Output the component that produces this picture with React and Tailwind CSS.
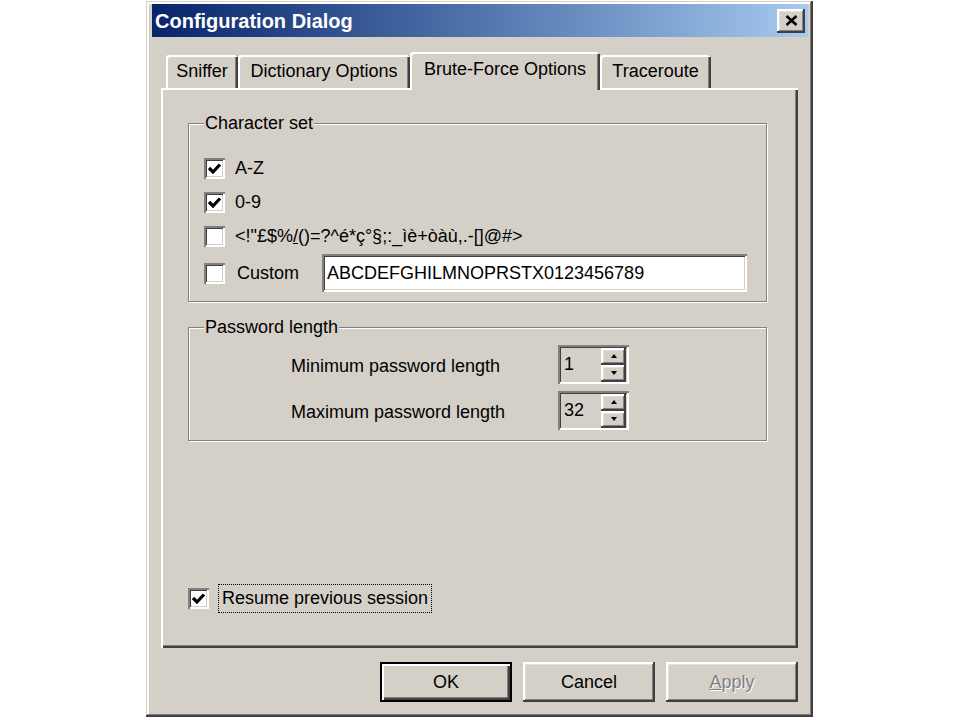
import React from "react";

// classic win2k bevels
const raised =
  "shadow-[inset_-2px_-2px_#404040,inset_2px_2px_#ffffff,inset_-3px_-3px_#808080,inset_3px_3px_#e4e1da]";
const sunken =
  "shadow-[inset_2px_2px_#808080,inset_-2px_-2px_#ffffff,inset_3px_3px_#404040,inset_-3px_-3px_#d4d0c8]";
const etched =
  "border border-[#808080] shadow-[inset_1px_1px_#ffffff,1px_1px_#ffffff]";

function CheckBox({ checked }) {
  return (
    <span
      className={`flex h-[21px] w-[21px] shrink-0 items-center justify-center bg-white ${sunken}`}
    >
      {checked && (
        <svg width="15" height="15" viewBox="0 0 15 15">
          <path
            d="M2 7 L6 11 L13 3.5"
            fill="none"
            stroke="#000"
            strokeWidth="3.2"
          />
        </svg>
      )}
    </span>
  );
}

function CheckRow({ checked, children }) {
  return (
    <div className="flex h-[34px] items-center">
      <CheckBox checked={checked} />
      <span className="ml-[10px] whitespace-nowrap">{children}</span>
    </div>
  );
}

function SpinBox({ value }) {
  return (
    <div className={`flex h-[39px] w-[71px] items-center bg-[#d4d0c8] pl-[6px] pr-[3px] ${sunken}`}>
      <span className="flex-1">{value}</span>
      <div className="flex flex-col">
        <button className={`flex h-[17px] w-[25px] items-center justify-center bg-[#d4d0c8] ${raised}`}>
          <svg width="6" height="4" viewBox="0 0 6 4">
            <polygon points="3,0 6,4 0,4" fill="#000" />
          </svg>
        </button>
        <button className={`flex h-[17px] w-[25px] items-center justify-center bg-[#d4d0c8] ${raised}`}>
          <svg width="6" height="4" viewBox="0 0 6 4">
            <polygon points="0,0 6,0 3,4" fill="#000" />
          </svg>
        </button>
      </div>
    </div>
  );
}

function Tab({ label, width, active }) {
  if (active) {
    return (
      <div
        className={`relative z-10 -mb-[2px] flex h-[38px] items-center justify-center rounded-t-[3px] bg-[#d4d0c8] pb-[4px] shadow-[inset_2px_2px_#ffffff,inset_-2px_0_#404040,inset_-3px_0_#808080] ${width}`}
      >
        {label}
      </div>
    );
  }
  return (
    <div
      className={`flex h-[33px] items-center justify-center rounded-t-[3px] bg-[#d4d0c8] shadow-[inset_2px_2px_#ffffff,inset_-2px_0_#404040,inset_-3px_0_#808080] ${width}`}
    >
      {label}
    </div>
  );
}

export default function App() {
  return (
    <div
      className="h-[720px] bg-white pl-[146px] pt-[1px] text-[18px] text-black"
      style={{ fontFamily: '"Liberation Sans", Arial, sans-serif' }}
    >
      {/* ===== WINDOW ===== */}
      <div className="flex h-[716px] w-[667px] flex-col bg-[#d4d0c8] pb-[15px] pl-[6px] pr-[5px] pt-[3px] shadow-[inset_-2px_-2px_#404040,inset_1px_1px_#d4d0c8,inset_-3px_-3px_#808080,inset_3px_3px_#ffffff]">
        {/* title bar */}
        <div className="flex h-[33px] items-center justify-between bg-linear-to-r from-[#0a246a] to-[#a6caf0] pl-[3px] pr-[3px]">
          <span className="text-[20px] font-bold text-white">Configuration Dialog</span>
          <button className={`flex h-[24px] w-[28px] items-center justify-center bg-[#d4d0c8] ${raised}`}>
            <svg width="13" height="11" viewBox="0 0 13 11">
              <path d="M1.5 1 L11.5 10 M11.5 1 L1.5 10" stroke="#000" strokeWidth="2.6" />
            </svg>
          </button>
        </div>

        <div className="flex flex-1 flex-col pl-[9px] pr-[10px]">
          {/* tabs */}
          <div className="mt-[15px] flex items-end pl-[5px]">
            <Tab label="Sniffer" width="w-[72px]" />
            <Tab label="Dictionary Options" width="w-[172px]" />
            <Tab label="Brute-Force Options" width="w-[190px]" active />
            <Tab label="Traceroute" width="w-[111px]" />
          </div>

          {/* panel */}
          <div className="flex h-[560px] flex-col pb-[35px] pl-[27px] pr-[31px] pt-[35px] shadow-[inset_2px_2px_#ffffff,inset_-2px_-2px_#404040,inset_-3px_-3px_#808080]">
            {/* character set */}
            <div className={`flex flex-col px-[15px] pb-[8px] ${etched}`}>
              <span className="-mt-[12px] self-start bg-[#d4d0c8] px-[1px] leading-[22px]">Character set</span>
              <div className="mt-[17px] flex flex-col">
                <CheckRow checked>A-Z</CheckRow>
                <CheckRow checked>0-9</CheckRow>
                <CheckRow>
                  {"<!\"£$%"}
                  <span className="underline">/</span>
                  {"()=?^é*ç°§;:_ìè+òàù,.-[]@#>"}
                </CheckRow>
                <div className="flex h-[40px] items-center">
                  <CheckBox />
                  <span className="ml-[12px] w-[85px]">Custom</span>
                  <div className={`flex h-[38px] w-[425px] items-center bg-white pl-[5px] ${sunken}`}>
                    ABCDEFGHILMNOPRSTX0123456789
                  </div>
                </div>
              </div>
            </div>

            {/* password length */}
            <div className={`mt-[25px] flex flex-col px-[15px] pb-[10px] ${etched}`}>
              <span className="-mt-[12px] self-start bg-[#d4d0c8] px-[1px] leading-[22px]">Password length</span>
              <div className="mt-[7px] flex flex-col gap-[7px] pl-[87px]">
                <div className="flex h-[39px] items-center">
                  <span className="w-[267px] pt-[3px]">Minimum password length</span>
                  <SpinBox value="1" />
                </div>
                <div className="flex h-[39px] items-center">
                  <span className="w-[267px] pt-[3px]">Maximum password length</span>
                  <SpinBox value="32" />
                </div>
              </div>
            </div>

            <div className="flex-1" />

            {/* resume */}
            <div className="flex h-[29px] items-center">
              <CheckBox checked />
              <span className="ml-[9px] flex h-[29px] items-center border border-dotted border-black px-[3px]">
                Resume previous session
              </span>
            </div>
          </div>

          {/* buttons */}
          <div className="mt-[14px] flex justify-end gap-[11px]">
            <button className="flex h-[40px] w-[132px] items-center justify-center bg-[#d4d0c8] shadow-[inset_0_0_0_2px_#000000,inset_4px_4px_#ffffff,inset_-4px_-4px_#404040,inset_-5px_-5px_#808080]">
              OK
            </button>
            <button className={`flex h-[40px] w-[132px] items-center justify-center bg-[#d4d0c8] ${raised}`}>
              Cancel
            </button>
            <button
              className={`flex h-[40px] w-[132px] items-center justify-center bg-[#d4d0c8] text-[#808080] [text-shadow:1px_1px_#ffffff] ${raised}`}
            >
              <span>
                <span className="underline">A</span>pply
              </span>
            </button>
          </div>
        </div>
      </div>
    </div>
  );
}
